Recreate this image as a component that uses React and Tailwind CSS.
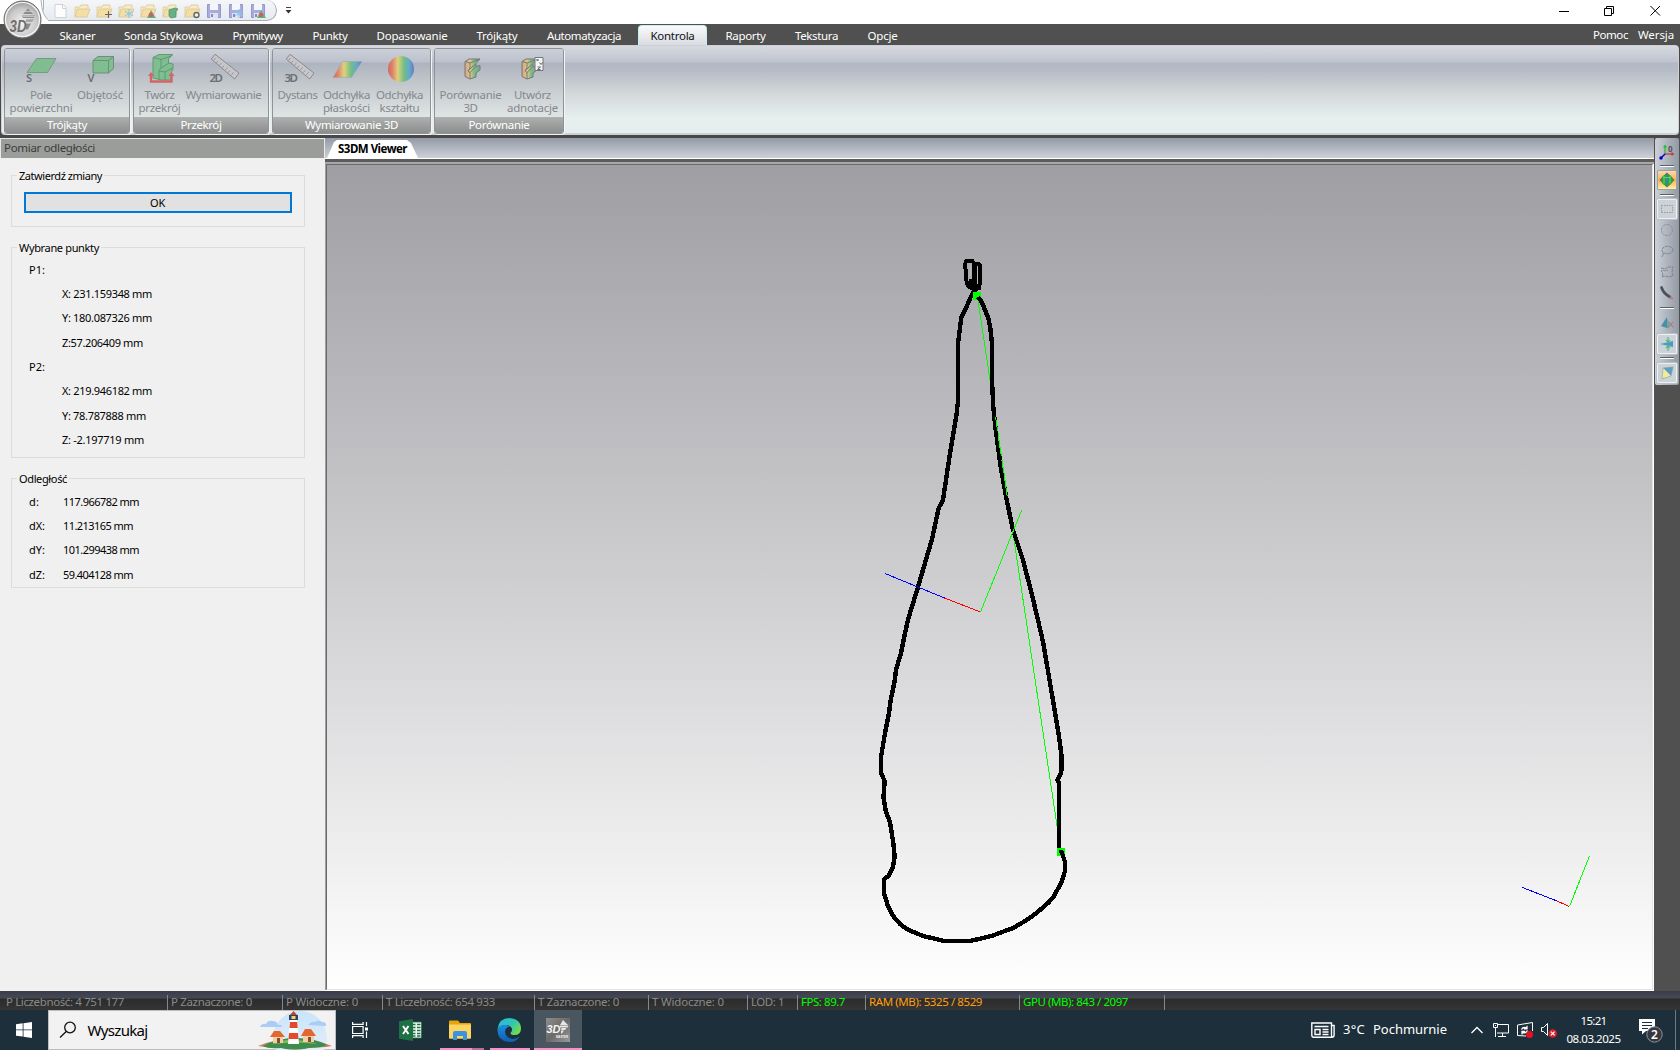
import { useLayoutEffect, useRef } from "react";

// Text run whose letter spacing is adjusted so that it takes `w` pixels.
function T({ w, className = "", children }) {
  const ref = useRef(null);
  useLayoutEffect(() => {
    const el = ref.current;
    el.style.letterSpacing = "0px";
    const natural = el.getBoundingClientRect().width;
    const n = el.textContent.length;
    el.style.letterSpacing = `${(w - natural) / n}px`;
  });
  return (
    <span ref={ref} className={`inline-block whitespace-pre ${className}`}>
      {children}
    </span>
  );
}

const MENU = [
  ["Skaner", 36],
  ["Sonda Stykowa", 79],
  ["Prymitywy", 50],
  ["Punkty", 35],
  ["Dopasowanie", 71],
  ["Trójkąty", 41],
  ["Automatyzacja", 74],
  ["Kontrola", 44],
  ["Raporty", 40],
  ["Tekstura", 43],
  ["Opcje", 30],
];

function Folder({ children }) {
  return (
    <svg className="h-[18px] w-[22px]" viewBox="0 0 22 18">
      <path d="M4 15V5h5l1-2h7v3" fill="#f7ebca" stroke="#d9c796" strokeWidth=".8" />
      <path d="M4 15l2-8h13l-3 8z" fill="#f3dfa6" stroke="#dcc48a" strokeWidth=".8" />
      {children}
    </svg>
  );
}

function Floppy({ children }) {
  return (
    <svg className="h-[18px] w-[22px]" viewBox="0 0 22 18">
      <path d="M4.500 2.500h13v13h-13z" fill="#aaaade" stroke="#9496cf" />
      <path d="M7 2h8v6H7z" fill="#f3f6fb" />
      <path d="M7 11h8v5H7z" fill="#dfe3ee" />
      <path d="M8 12h2v3H8z" fill="#8789bd" />
      {children}
    </svg>
  );
}

function Snow() {
  return <path d="M14 7v9M10 9.200l8 4.600M18 9.200l-8 4.600" stroke="#8cc4ec" strokeWidth="1.300" strokeDasharray="2 .6" />;
}

function Cone() {
  return (
    <g>
      <path d="M14 8l5 8h-9z" fill="#55b97c" />
      <circle cx="14" cy="13" r="2.300" fill="#d85a62" />
    </g>
  );
}

function TitleBar() {
  return (
    <header className="relative flex h-6 items-start bg-white">
      <div className="ml-[43px] flex h-[21px] w-[234px] items-center rounded-r-full border border-t-0 border-[#a9abb8] bg-linear-to-b from-[#f5f6f8] to-[#e6ebf0] pl-[5px] pt-px">
        <svg className="h-[18px] w-[22px]" viewBox="0 0 22 18">
          <path d="M6 2.500h8l3 3v10H6z" fill="#fdfdfe" stroke="#cdd1da" />
          <path d="M13.500 2.500v4H17" fill="none" stroke="#cdd1da" />
        </svg>
        <Folder />
        <Folder><path d="M15.500 9v7M12 12.500h7" stroke="#666" strokeWidth="1.100" /></Folder>
        <Folder><Snow /></Folder>
        <Folder><Cone /></Folder>
        <Folder><path d="M10 8l6-2 3 1-2 2v6l-5 1-2-2z" fill="#65b183" stroke="#4a9168" strokeWidth=".7" /></Folder>
        <Folder><circle cx="15.500" cy="13" r="2.500" fill="#f7f4ea" stroke="#666" strokeWidth="1.400" /></Folder>
        <Floppy />
        <Floppy><Snow /></Floppy>
        <Floppy><Cone /></Floppy>
      </div>
      <svg className="ml-[8px] mt-[6px] h-2 w-[7px]" viewBox="0 0 7 8">
        <path d="M1 1.500h5" stroke="#444" />
        <path d="M.500 4h6l-3 3.500z" fill="#333" />
      </svg>
      <svg className="ml-auto mr-[19px] mt-[5px] h-3 w-[103px]" viewBox="0 0 103 12" fill="none" stroke="#000">
        <path d="M1 6.500h10" />
        <path d="M46.500 3.500h7v7h-7zM48.500 3V1.500h7v7H54" />
        <path d="M92.500 1l9.500 9.500M102 1l-9.500 9.500" />
      </svg>
      <svg className="absolute left-0 top-0 z-10 h-10 w-12" viewBox="0 0 48 40">
        <defs>
          <radialGradient id="orb" cx=".5" cy=".6" r=".6">
            <stop offset="0" stopColor="#f4f4f4" />
            <stop offset=".65" stopColor="#c8c8c8" />
            <stop offset="1" stopColor="#959595" />
          </radialGradient>
        </defs>
        <path d="M36 0h7q-1 15 6 20.500v3.500H38z" fill="#fff" />
        <path d="M41 0q1 16 8 20.500" fill="none" stroke="#a9abb8" />
        <circle cx="22.500" cy="19.500" r="18.500" fill="url(#orb)" stroke="#6d6d6d" strokeWidth="1" />
        <circle cx="22.500" cy="19.500" r="17" fill="none" stroke="#f6f6f6" strokeWidth="1.200" />
        <path d="M28 8.500l5 5.500h-10zM22 15.500h13l-1 2.500H23zM26 19.500h8l-2 2.500h-6zM26 23.500h5l-3 6h-2z" fill="#8c8c8c" />
        <path d="M22 11.500h11M23 16.500h12M25 21h9" stroke="#d6d6d6" strokeWidth=".7" />
        <text x="9.500" y="31.500" className="font-['Liberation_Sans'] text-[16px] font-bold italic" fill="#6f6f6f" textLength="17" lengthAdjust="spacingAndGlyphs">3D</text>
      </svg>
    </header>
  );
}

function MenuBar() {
  return (
    <nav className="flex h-[21px] bg-[#505050] pl-[45px] text-[11.500px] leading-[23px] text-white">
      <div className="grid grid-cols-[65px_107px_81px_64px_100px_70px_104px_75px_69px_73px_59px] text-center">
        {MENU.map(([label, w]) =>
          label === "Kontrola" ? (
            <div key={label} className="ml-[2px] mr-[4px] mt-px h-5 rounded-t-[4px] border border-b-0 border-[#c4f0f4] bg-linear-to-b from-[#fafafb] to-[#d9dce3] leading-[20px] text-[#111]">
              <T w={w}>{label}</T>
            </div>
          ) : (
            <div key={label} className="overflow-hidden"><T w={w}>{label}</T></div>
          )
        )}
      </div>
      <div className="ml-auto flex gap-[10px] pr-[6px] leading-[22px]">
        <T w={35}>Pomoc</T>
        <T w={36}>Wersja</T>
      </div>
    </nav>
  );
}

function Ruler({ label, dx = 0 }) {
  return (
    <g transform={`translate(${dx} 0)`}>
      <path d="M210.700 59l3.800-4.700 24 18.800-4.400 5.900z" fill="#c7c7cb" stroke="#8a8a8e" />
      <path d="M213 60.500l2-2.500M216 63l1.500-2M219 65.300l2-2.500M222 67.700l1.500-2M225 70l2-2.500M228 72.400l1.500-2M231 74.800l2-2.500" stroke="#8a8a8e" strokeWidth=".8" />
      <text x="209" y="81.500" className="text-[11.500px] font-semibold" fill="#6c6e72" textLength="13.500">{label}</text>
    </g>
  );
}

function Profile({ dx = 0 }) {
  return (
    <g transform={`translate(${dx} 0)`}>
      <path d="M464.500 61.500l4-2.500h11l-4 4.500v3l4-1v4.500l-4 3v4l-6 2-5-2.500z" fill="url(#rain2)" stroke="#77797a" />
      <path d="M464.500 61.500l5 1.500 10-4M469.500 79v-7M469.500 63v5l-2 3 2 1.500 6-6M467.500 71l4-4 4-3" fill="none" stroke="#77797a" />
    </g>
  );
}

const GROUPS = [
  {
    name: "Trójkąty", cw: 40, box: "w-[126px]", cols: "grid-cols-[73px_45px]",
    items: [
      { x: 5, w: 73, l: [["Pole", 22], ["powierzchni", 63]], icon: (
        <g>
          <path d="M36 58.500h19.500L47 72.500H26.500z" fill="#80bd90" stroke="#779a80" />
          <text x="25.500" y="81.500" className="text-[11px] font-semibold" fill="#6c6e72">S</text>
        </g>) },
      { x: 78, w: 45, l: [["Objętość", 46]], icon: (
        <g>
          <path d="M92.500 60.500l5-4h15.500v12l-5 4.500H92.500z" fill="#80bd90" stroke="#6f8f78" />
          <path d="M92.500 60.500H108l5-4M108 60.500V73" fill="none" stroke="#6f8f78" />
          <text x="87" y="81.500" className="text-[11px] font-semibold" fill="#6c6e72">V</text>
        </g>) },
    ],
  },
  {
    name: "Przekrój", cw: 41, box: "w-[136px]", cols: "grid-cols-[52px_76px]",
    items: [
      { x: 134, w: 52, l: [["Twórz", 30], ["przekrój", 42]], icon: (
        <g>
          <path d="M152.500 57.500l6-3h13.500l-4 4.500v4l4.500 1v5l-1.500 3v8h-10l-8.500-2z" fill="#80bd90" stroke="#5f9a72" />
          <path d="M152.500 57.500l8 2 11.500-4M160.500 59.500v8.500l-2 2.500v9M160.500 68l8-5M158.500 71l6 1 7.500-4M164.500 72v8" fill="none" stroke="#5f9a72" />
          <path d="M150.500 75v6.500H171V75" fill="none" stroke="#d46468" strokeWidth="2.400" />
          <path d="M147.500 76l3-4 3 4zM168 76l3-4 3 4z" fill="#d46468" />
        </g>) },
      { x: 186, w: 76, l: [["Wymiarowanie", 76]], icon: <Ruler label="2D" /> },
    ],
  },
  {
    name: "Wymiarowanie 3D", cw: 93, box: "w-[159px]", cols: "grid-cols-[50px_48px_58px]",
    items: [
      { x: 273, w: 50, l: [["Dystans", 40]], icon: <Ruler label="3D" dx={75} /> },
      { x: 323, w: 48, l: [["Odchyłka", 47], ["płaskości", 47]], icon: (
        <path d="M342 61.500h19.500L351 77.500h-18.500z" fill="url(#rain)" stroke="#a5a8a8" strokeWidth=".6" />) },
      { x: 371, w: 58, l: [["Odchyłka", 47], ["kształtu", 40]], icon: (
        <circle cx="400.500" cy="69" r="13" fill="url(#rain)" />) },
    ],
  },
  {
    name: "Porównanie", cw: 61, box: "w-[130px]", cols: "grid-cols-[72px_52px]",
    items: [
      { x: 435, w: 72, l: [["Porównanie", 62], ["3D", 14]], icon: <Profile /> },
      { x: 507, w: 52, l: [["Utwórz", 37], ["adnotacje", 51]], icon: (
        <g>
          <Profile dx={57} />
          <path d="M534.500 57.500h8v13h-8z" fill="#f2f4f5" stroke="#777" />
          <path d="M536 59l2 2m0-2l-2 2M539 62.500l1.500 2 1.500-2M537 67h3l-3 2.500h3" fill="none" stroke="#555" strokeWidth=".9" />
        </g>) },
    ],
  },
];

function Ribbon() {
  return (
    <section className="h-[93px] bg-[#484848]">
      <div className="mx-px flex h-[90px] gap-[3px] rounded-[4px] border border-b-2 border-[#cfd0d3] bg-[linear-gradient(180deg,#d6d9df_0px,#bfc3cf_16px,#b2b8c4_17px,#b5bbc6_24px,#d2d6d8_46px,#e6efee_72px,#e6efef_88px)] pl-[2px] pt-[2px]">
        {GROUPS.map((g) => (
          <div key={g.name} className={`flex h-[86px] flex-col overflow-hidden rounded-[3px] border border-[#8f9296] shadow-[1px_1px_0_#f2f5f5,inset_1px_1px_0_#dfe2e6] ${g.box}`}>
            <div className={`grid h-[68px] bg-[linear-gradient(180deg,#cbd0d8_0px,#bcc1cd_13px,#adb4bf_14px,#c0c5ca_32px,#dfe5e4_68px)] ${g.cols}`}>
              {g.items.map((it) => (
                <div key={it.x} className="-ml-px flex flex-col items-center text-[11.500px] leading-[13px] text-[#85888c]">
                  <svg className="mb-[1px] ml-px h-[38px] w-full shrink-0 overflow-visible" viewBox={`${it.x} 49 ${it.w} 38`}>{it.icon}</svg>
                  {it.l.map(([t, w]) => <T key={t} w={w}>{t}</T>)}
                </div>
              ))}
            </div>
            <div className="flex-1 bg-linear-to-b from-[#afb1b0] to-[#8c8e8d] text-center text-[11.500px] leading-[16px] text-white">
              <T w={g.cw}>{g.name}</T>
            </div>
          </div>
        ))}
      </div>
    </section>
  );
}

function Box({ title, w, className, children }) {
  return (
    <fieldset className={`relative ml-[11px] w-[294px] border border-[#dcdcdc] ${className}`}>
      <span className="absolute -top-[8px] left-[5px] bg-[#f0f0f0] px-[2px] leading-[16px]"><T w={w}>{title}</T></span>
      {children}
    </fieldset>
  );
}

const POINTS = [
  ["P1:", 16, null],
  [null, 0, "X: 231.159348 mm", 90],
  [null, 0, "Y: 180.087326 mm", 90],
  [null, 0, "Z:57.206409 mm", 81],
  ["P2:", 16, null],
  [null, 0, "X: 219.946182 mm", 90],
  [null, 0, "Y: 78.787888 mm", 84],
  [null, 0, "Z: -2.197719 mm", 82],
];
const DIST = [
  ["d:", 10, "117.966782 mm", 76],
  ["dX:", 16, "11.213165 mm", 70],
  ["dY:", 16, "101.299438 mm", 76],
  ["dZ:", 16, "59.404128 mm", 70],
];

function Rows({ data, className }) {
  return data.map(([l, lw, v, vw], i) => (
    <div key={i} className="flex h-[24.300px] items-center">
      <span className={`shrink-0 ${className}`}>{l && <T w={lw}>{l}</T>}</span>
      {v && <T w={vw}>{v}</T>}
    </div>
  ));
}

function SidePanel() {
  return (
    <aside className="flex h-[853px] w-[325px] flex-col bg-[#f0f0f0] text-[11px] text-black">
      <div className="h-5 border border-b-0 border-[#e8e8e8] bg-[#9b9d9a] pl-[3px] text-[11.500px] leading-[18px] text-[#3c3c3c]">
        <T w={91}>Pomiar odległości</T>
      </div>
      <Box title="Zatwierdź zmiany" w={83} className="mt-[17px] h-[52px]">
        <button className="ml-[12px] mt-[16px] block h-[21px] w-[268px] border-2 border-[#0078d7] bg-[#e1e1e1] pr-px text-center leading-[17px]"><T w={15}>OK</T></button>
      </Box>
      <Box title="Wybrane punkty" w={80} className="mt-[20px] h-[211px] pl-[17px] pt-[10px]"><Rows data={POINTS} className="w-[33px]" /></Box>
      <Box title="Odległość" w={48} className="mt-[20px] h-[110px] pl-[17px] pt-[11px]"><Rows data={DIST} className="w-[34px]" /></Box>
    </aside>
  );
}

const BOTTLE =
  "M976 289L973.500 292 970.700 297 965 310.500 961.300 317 960.300 325 958.300 341 958 401 956.700 413 954 430 949.300 458 946.300 478 943 500 938.700 508 932.300 538 925 563 918 587 908.500 618 905 633 901 653 896 670 894.500 682 890.700 700 889 713 885 733 881 757 881 773 884.700 781 883.500 797 885.700 811 890 822 893.300 843 894.700 857 892.700 868 888.300 876 884 879.500 884 893 888 906.500 893.500 916.500 900 924 906.500 929 923 936 943 940.700 971.500 940.700 991.500 936 1013 928 1026 920.500 1036.500 913 1048 903 1053.500 897 1061.500 882 1065 871 1065 862 1062 853 1059 848 1059 783 1057.300 780 1061.300 772 1061.700 757 1058.500 733 1051.700 693 1043.300 643 1037.500 618 1031.500 593 1023 560 1013 530 1006.700 500 1000.700 467 995 424 993.300 407 992 380 992 343 990.300 328 988.300 318 981.700 302 978 297";

function Viewport() {
  return (
    <div className="flex-1 border-l border-[#a0a0a0]">
      <div className="h-full border border-[#696969] border-r-[#e3e3e3] border-b-[#e3e3e3] bg-linear-to-b from-[#9f9ea3] to-white">
        <svg className="block h-[824px] w-[1325px]" viewBox="327 165 1325 824" shapeRendering="crispEdges" fill="none">
          <path d="M977.500 297L1061 852" stroke="#0f0" />
          <path d="M973 292h8v8h-8zM1057 848h8v8h-8z" fill="#0f0" />
          <path d={BOTTLE} stroke="#000" strokeWidth="4.400" strokeLinejoin="round" />
          <path d="M965 263q1-2.500 4-2.500h3l2 3h3q3 0 3 3v16q0 4-4 7M965 263l1.500 18q1 6 5 7" stroke="#000" strokeWidth="4" strokeLinejoin="round" />
          <path d="M972 262h4v27h-4zM976 284h4v5h-4zM969 279h4v10h-3z" fill="#000" stroke="#000" />
          <path d="M970.500 266v9M977.500 267v16" stroke="#b9b9bc" />
          <path d="M973 293h8M974 292v8M1057 849h8M1058 848v8" stroke="#0f0" strokeWidth="2" />
          <path d="M995.500 417L1007.500 498" stroke="#0f0" strokeDasharray="14 3 20 6" />
          <path d="M885 573.500L944.500 598" stroke="#00f" />
          <path d="M944.500 598L980.500 612" stroke="#f00" />
          <path d="M980.500 612L1021.500 510.500" stroke="#0f0" />
          <path d="M1522.500 887.500L1557 901" stroke="#00f" />
          <path d="M1557 901L1569.500 906.500" stroke="#f00" />
          <path d="M1569.500 906.500L1589.500 856" stroke="#0f0" />
        </svg>
      </div>
    </div>
  );
}

function Viewer() {
  return (
    <main className="flex h-[853px] w-[1329px] flex-col bg-white">
      <div className="h-5 bg-linear-to-b from-[#949ba6] to-[#cdd1d8]">
        <div className="ml-[2px] h-5 w-[91px] pt-[2px]">
          <div className="h-[18px] bg-white pl-[11px] text-[11.500px] font-bold leading-[18px] text-black [clip-path:polygon(0_100%,7px_2px,10px_0,80px_0,84px_3px,91px_100%)]">
            <T w={69}>S3DM Viewer</T>
          </div>
        </div>
      </div>
      <div className="mt-px h-[3px] bg-[#5c5c5c]" />
      <div className="h-[2px] bg-[#a8a8a8]" />
      <div className="flex min-h-0 flex-1 pb-px pr-px"><Viewport /></div>
    </main>
  );
}

function ToolIcon({ children, className = "" }) {
  return (
    <div className={`flex h-5 w-5 items-center justify-center ${className}`}>
      <svg className="h-4 w-4" viewBox="0 0 16 16" fill="none">{children}</svg>
    </div>
  );
}

function Sep({ className }) {
  return <div className={`h-[2px] w-[14px] border-t border-[#5d6067] bg-white ${className}`} />;
}

function ToolStrip() {
  const box = "rounded-[1px] border border-[#eef1f3] bg-[#cbd2d8] shadow-[0_0_0_1px_#b9bfc7]";
  return (
    <aside className="h-[853px] flex-1 bg-[#505050]">
      <div className="ml-px flex h-[247px] w-6 flex-col items-center rounded-[2px] bg-linear-to-r from-[#ccd1d8] to-[#929aa4] pt-[4px]">
        <ToolIcon>
          <path d="M6 10V2" stroke="#2b2" strokeWidth="1.200" />
          <path d="M6 10h8" stroke="#c33" strokeWidth="1.200" />
          <path d="M4 3.500l2-3 2 3z" fill="#2b2" /><path d="M12.500 8l3 2-3 2z" fill="#c33" />
          <path d="M6 10l-4 4" stroke="#00c" strokeWidth="1.500" /><circle cx="2" cy="14" r="1.700" fill="#00c" />
          <text x="9" y="7.500" className="text-[8px] font-bold" fill="#555">0</text>
        </ToolIcon>
        <Sep className="mt-[3px]" />
        <ToolIcon className="mt-[3px] rounded-[1px] border border-[#8fa3b0] bg-linear-to-b from-[#fbd9ab] via-[#fdb04e] to-[#fff0a0]">
          <path d="M8 .500l7.500 7.500L8 15.500.500 8z" fill="#6f6250" />
          <circle cx="8" cy="8" r="5.800" fill="#27a835" />
          <path d="M2 8h12M8 2v12" stroke="#3f7fb8" strokeWidth="1.200" />
          <path d="M5 4.500v7M11 4.500v7M4 5q4 1.500 8 0" stroke="#7fe06a" strokeWidth=".8" />
        </ToolIcon>
        <Sep className="mt-[4px]" />
        <ToolIcon className={`mt-[3px] ${box}`}><path d="M2.500 4.500h11v7h-11z" stroke="#9298a0" strokeDasharray="1.500 1" /></ToolIcon>
        <ToolIcon className="mt-[1px]"><circle cx="8" cy="8" r="5.500" stroke="#878d95" strokeDasharray="2 .8" /></ToolIcon>
        <ToolIcon className="mt-[1px]"><ellipse cx="8.500" cy="7" rx="5.500" ry="3.700" stroke="#7e848c" strokeDasharray="3 .8" /><path d="M4 9.500q1 1.500-1 4.500" stroke="#7e848c" /></ToolIcon>
        <ToolIcon className="mt-[1px]"><path d="M2 4l4 1 3-2h5l-1 5 1 4-4 1-4-1-3 1q2-4-1-6 3-1 4 0l3-1" stroke="#7e848c" strokeDasharray="3 .8" /></ToolIcon>
        <ToolIcon className="mt-[1px]"><path d="M2.500 2.500q2 6 8.500 9.500" stroke="#4c5056" strokeWidth="2.700" strokeLinecap="round" /><path d="M11 12l3 2" stroke="#c07880" strokeWidth="2" /></ToolIcon>
        <Sep className="mt-[4px]" />
        <ToolIcon className="mt-[4px]">
          <path d="M2 11l6-9v11z" fill="#4a8ea8" /><path d="M8 3l3 8-3 3z" fill="#68aa9c" />
          <path d="M9.500 6.500l5 6M14.500 6.500l-5 6" stroke="#b46c74" />
        </ToolIcon>
        <ToolIcon className={`mt-[1px] ${box}`}>
          <path d="M1 8l13-3v6z" fill="#4a9cc0" /><path d="M9 1v4M9 11v4M7 4l2 2 2-2M7 12l2-2 2 2" stroke="#5bb87a" strokeWidth="1.200" />
        </ToolIcon>
        <Sep className="mt-[3px]" />
        <ToolIcon className={`mt-[4px] ${box}`}>
          <path d="M4 3l10-1-2 9z" fill="#5a9fc8" /><path d="M4 3l8 8-9 3z" fill="#f1ec9a" /><path d="M4 3l10-1-2 9-9 3z" stroke="#8f989c" strokeWidth=".6" />
        </ToolIcon>
      </div>
    </aside>
  );
}

const STATUS = [
  ["P Liczebność: 4 751 177", 118, "text-[#8a8a8a]"],
  ["P Zaznaczone: 0", 81, "text-[#8a8a8a]"],
  ["P Widoczne: 0", 72, "text-[#8a8a8a]"],
  ["T Liczebność: 654 933", 109, "text-[#8a8a8a]"],
  ["T Zaznaczone: 0", 81, "text-[#8a8a8a]"],
  ["T Widoczne: 0", 72, "text-[#8a8a8a]"],
  ["LOD: 1", 33, "text-[#8a8a8a]"],
  ["FPS: 89.7", 44, "text-[#0f0]"],
  ["RAM (MB): 5325 / 8529", 113, "text-[#ffa010]"],
  ["GPU (MB): 843 / 2097", 105, "text-[#0f0]"],
];

function StatusBar() {
  return (
    <footer className="grid h-[19px] grid-cols-[165px_115px_100px_152px_114px_99px_50px_68px_154px_145px] bg-[linear-gradient(180deg,#3a3d48_0px,#454956_7px,#2b2b2b_8px,#353535_19px)] pl-[3px] text-[11.500px] leading-[21px]">
      {STATUS.map(([t, w, c]) => (
        <div key={t} className={`mt-[4px] h-[15px] border-r border-[#85878c] pl-[3px] leading-[14px] ${c}`}><T w={w}>{t}</T></div>
      ))}
    </footer>
  );
}

function Lighthouse() {
  return (
    <svg className="ml-auto mr-[3px] h-10 w-[74px]" viewBox="0 0 74 40">
      <defs>
        <linearGradient id="sky" x1="0" y1="0" x2="0" y2="1"><stop offset="0" stopColor="#c8e4fb" /><stop offset="1" stopColor="#eef1fa" /></linearGradient>
      </defs>
      <circle cx="42" cy="28" r="27" fill="url(#sky)" />
      <path d="M2 17q2-4 6-3 2-4 7-3 4 0 5 4 4-1 4 2zM50 15q3-4 7-3 4-3 7 0 5 0 4 4z" fill="#a9cdf4" />
      <path d="M0 36q16-7 37-7t37 7q-8 2-20 1-17 5-34 0-10 1-20-1z" fill="#c88363" />
      <path d="M5 36q14-8 33-8t31 7q-5 3-18 3-15 3-28 0-13 1-18-2z" fill="#3f8d4e" />
      <path d="M14 34q12-5 25-4t20 4q-20-3-45 0z" fill="#7fbf5a" />
      <path d="M32 9h7l2 25H30z" fill="#fff" />
      <path d="M32 12h7.200l.5 6H31.500zM31 23h9l.5 6H30.500z" fill="#e2492f" />
      <path d="M31 5h9v5h-9z" fill="#27456b" /><path d="M32 5l3.500-4L39 5z" fill="#c74028" /><path d="M33.500 6h4v3h-4z" fill="#ffcf5a" />
      <path d="M15 26h10v7H15zM45 25h11v7H45z" fill="#f3cfa8" />
      <path d="M12 27l4-6h6l5 6zM43 26l4-7h6l5 7z" fill="#e2682d" /><path d="M19 28h3v5h-3zM50 27h3v5h-3z" fill="#8d4a34" />
    </svg>
  );
}

function Logo3D() {
  return (
    <svg className="h-6 w-6 overflow-visible" viewBox="0 0 24 24">
      <defs><linearGradient id="lg" x1="0" y1="0" x2="1" y2="1"><stop offset="0" stopColor="#8f8f8f" /><stop offset=".5" stopColor="#6a6a6a" /><stop offset="1" stopColor="#9a9a9a" /></linearGradient></defs>
      <path d="M0 0h24v24H0z" fill="url(#lg)" />
      <path d="M17 2l5 5h-8zM14 7.500h8.500l-1 2H14zM15.500 10h5l-1.500 2h-4zM15 12.500h3l-2 3h-1z" fill="#e6e6e6" />
      <text x="0.500" y="15" className="font-['Liberation_Sans'] text-[11.500px] font-bold italic" fill="#f4f4f4" textLength="14" lengthAdjust="spacingAndGlyphs">3D</text>
      <text x="10" y="19.500" className="font-['Liberation_Sans'] text-[4px] font-bold" fill="#f4f4f4" textLength="12" lengthAdjust="spacingAndGlyphs">MASTER</text>
    </svg>
  );
}

function TaskButton({ className = "", bar, children }) {
  return (
    <div className={`flex h-10 flex-col items-center ${className}`}>
      <div className="flex h-[38px] items-center pt-px">{children}</div>
      {bar}
    </div>
  );
}

function TaskBar() {
  return (
    <footer className="flex h-10 items-center bg-[#1d2f3a] text-white">
      <div className="flex w-12 justify-center">
        <svg className="h-4 w-4" viewBox="0 0 16 16" fill="#fff"><path d="M0 2.300L6.700 1.300v6.200H0zM7.500 1.200L16 0v7.500H7.500zM0 8.300h6.700v6.300L0 13.700zM7.500 8.300H16V16L7.500 14.800z" /></svg>
      </div>
      <div className="flex h-10 w-72 items-center border border-[#b9bec1] bg-[#f2f2f2] pl-[10px] text-black">
        <svg className="h-[18px] w-[18px]" viewBox="0 0 18 18" fill="none" stroke="#111" strokeWidth="1.300"><circle cx="11" cy="6.500" r="5.300" /><path d="M7.200 10.500L1 16.500" /></svg>
        <span className="ml-[10.500px] text-[15px]"><T w={60}>Wyszukaj</T></span>
        <Lighthouse />
      </div>
      <div className="grid grid-cols-[48px_54px_44px_8px_40px_4px_48px]">
        <TaskButton>
          <svg className="h-4 w-4" viewBox="0 0 16 16" fill="none" stroke="#fff" strokeWidth="1.200"><path d="M.600 4.500h10.500v7H.600zM.600 0v2.300h10.500V0M.600 16v-2.300h10.500V16M14.500 0v4M14.500 9.500V16" /><path d="M13 5.500h3v3h-3z" fill="#fff" stroke="none" /></svg>
        </TaskButton>
        <TaskButton>
          <svg className="-ml-[2px] h-[22px] w-[23px]" viewBox="0 0 23 22">
            <path d="M12 3h10.500v16H12z" fill="#f4f7f4" stroke="#1e7145" strokeWidth=".8" />
            <path d="M13 5.500h3.500M18 5.500h3.500M13 8.500h3.500M18 8.500h3.500M13 11.500h3.500M18 11.500h3.500M13 14.500h3.500M18 14.500h3.500M13 17h3.500M18 17h3.500" stroke="#1e7145" strokeWidth="1.500" />
            <path d="M0 2.300L14 0v22L0 19.700z" fill="#1e7145" />
            <path d="M4 7l5.500 8M9.500 7L4 15" stroke="#fff" strokeWidth="1.900" />
          </svg>
        </TaskButton>
        <TaskButton className="col-span-2 -ml-[4px] mr-[6px]" bar={<div className="flex h-[2px] w-full"><div className="ml-[6px] h-[2px] w-[32px] bg-[#f78fcb]" /><div className="h-[2px] flex-1 bg-[#b96f9b]" /></div>}>
          <svg className="ml-[2px] h-[20px] w-[22px]" viewBox="0 0 22 20">
            <path d="M0 1.500Q0 .500 1 .500h8l2 2.500h10q1 0 1 1V18H0z" fill="#e8a30c" />
            <path d="M0 4.500h22V18q0 .800-1 .800H1Q0 18.800 0 18z" fill="#fcd462" />
            <path d="M4 20v-7q0-2 2-2h10q2 0 2 2v7h-4v-4H8v4z" fill="#3c93dd" />
          </svg>
        </TaskButton>
        <TaskButton className="-mx-px" bar={<div className="h-[2px] w-10 bg-[#f78fcb]" />}>
          <svg className="-ml-[2px] h-6 w-6" viewBox="0 0 24 24">
            <defs>
              <linearGradient id="e1" x1="0" y1="0" x2="1" y2=".6"><stop offset="0" stopColor="#2fb6e9" /><stop offset=".6" stopColor="#2fc4b4" /><stop offset="1" stopColor="#6fdc4f" /></linearGradient>
              <linearGradient id="e2" x1="0" y1="0" x2="0" y2="1"><stop offset="0" stopColor="#1b8fe0" /><stop offset="1" stopColor="#0f5cb0" /></linearGradient>
            </defs>
            <path d="M.500 11Q2 0 12.500 0 24 1 24 11q-.5 6-6.500 6-4 0-4-2 2-2 1.500-4.500Q13.500 7 8.500 7 3.500 7 .500 11z" fill="url(#e1)" />
            <path d="M.500 11q3-4.500 8-4 2.500 0 4.500 1.500Q8.500 9 8 13.500q0 6 7 7.500 4 .500 7.500-2.500-4 6-11 5.500Q0 22.500.500 11z" fill="url(#e2)" />
            <path d="M8 13.500q.5 6 7 7.500 4 .500 7.500-2.500-2.500 4.500-7.500 5.300Q8 22 8 13.500z" fill="#1264b8" />
          </svg>
        </TaskButton>
        <div />
        <TaskButton className="bg-[#4a565f]" bar={<div className="h-[2px] w-12 bg-[#f78fcb]" />}><Logo3D /></TaskButton>
      </div>
      <div className="ml-auto flex h-10 items-center">
        <svg className="h-4 w-6" viewBox="0 0 24 16" fill="none" stroke="#fff" strokeWidth="1.400"><path d="M20.500 3.500V1H.800v12q0 2.200 2 2.200h18q2.300 0 2.300-2.200V3.500h-2.600V13q0 2 1 2M3.500 4.500h14M11.500 7.500h6M11.500 10h6M11.500 12.500h6" /><path d="M4 7.500h5v5H4z" /></svg>
        <span className="ml-[8px] text-[13px]"><T w={22}>3°C</T></span>
        <span className="ml-[8px] text-[13px]"><T w={74}>Pochmurnie</T></span>
        <svg className="ml-[24px] h-2 w-3" viewBox="0 0 12 8" fill="none" stroke="#fff" strokeWidth="1.300"><path d="M.500 7L6 1.500 11.500 7" /></svg>
        <svg className="ml-[10px] h-4 w-4" viewBox="0 0 16 16" fill="none" stroke="#fff"><path d="M5 2.500h10.500v8.500H4M2.500 6v9M5 14.500h8M9.500 11v3" /><path d="M.500 1.500h4v4h-4z" /><path d="M2 3.500h1" /></svg>
        <svg className="ml-[8px] h-4 w-4" viewBox="0 0 16 16" fill="none" stroke="#fff"><path d="M9 14L.500 13.500V3L15.500.500V9" /><path d="M4.500 7.500q1.500-3 5-1.500M10 3.800v3H7M10.500 8.500q-1 3-5 2M5 12.500v-3h3" strokeWidth="1.300" /><circle cx="12.500" cy="12.500" r="3.500" fill="#e81123" stroke="none" /></svg>
        <svg className="ml-[8px] h-4 w-4" viewBox="0 0 16 16" fill="none" stroke="#fff"><path d="M.500 5.500h2l4-4v12l-4-4h-2z" /><circle cx="11.700" cy="11.500" r="4.300" fill="#d8202c" stroke="none" /><path d="M9.800 9.600l3.800 3.800M13.600 9.600l-3.800 3.800" strokeWidth="1.200" /></svg>
        <div className="ml-[8px] mr-px flex w-[57px] flex-col items-center text-[11.500px] leading-[18px]">
          <T w={26}>15:21</T>
          <T w={54}>08.03.2025</T>
        </div>
        <svg className="ml-[16px] mt-[2px] h-[26px] w-6" viewBox="0 0 24 26">
          <path d="M0 1h16v12H7l-4 3.500V13H0z" fill="#fff" /><path d="M3 4.500h10M3 7.500h10M3 10.500h6" stroke="#1d2f3a" />
          <circle cx="15.500" cy="16.500" r="7.700" fill="#35393d" stroke="#8e959b" />
          <text x="15.500" y="20.800" textAnchor="middle" className="text-[12px] font-semibold" fill="#fff">2</text>
        </svg>
        <div className="ml-[12px] mr-[4px] h-10 w-px bg-[#6d7a82]" />
      </div>
    </footer>
  );
}

export default function App() {
  return (
    <div className="flex h-[1050px] w-[1680px] flex-col overflow-hidden bg-[#505050] font-['Noto_Sans',sans-serif]">
      <svg className="absolute h-0 w-0">
        <defs>
          <linearGradient id="rain">
            <stop offset="0" stopColor="#d2656c" /><stop offset=".16" stopColor="#e08068" /><stop offset=".38" stopColor="#ddd27c" />
            <stop offset=".62" stopColor="#74bd84" /><stop offset=".82" stopColor="#62a9cf" /><stop offset="1" stopColor="#6a78ba" />
          </linearGradient>
          <linearGradient id="rain2">
            <stop offset="0" stopColor="#d8a088" /><stop offset=".35" stopColor="#dccb80" /><stop offset=".6" stopColor="#80b98a" /><stop offset="1" stopColor="#6fae88" />
          </linearGradient>
        </defs>
      </svg>
      <TitleBar />
      <MenuBar />
      <Ribbon />
      <div className="flex h-[853px]">
        <SidePanel />
        <Viewer />
        <ToolStrip />
      </div>
      <StatusBar />
      <TaskBar />
    </div>
  );
}
